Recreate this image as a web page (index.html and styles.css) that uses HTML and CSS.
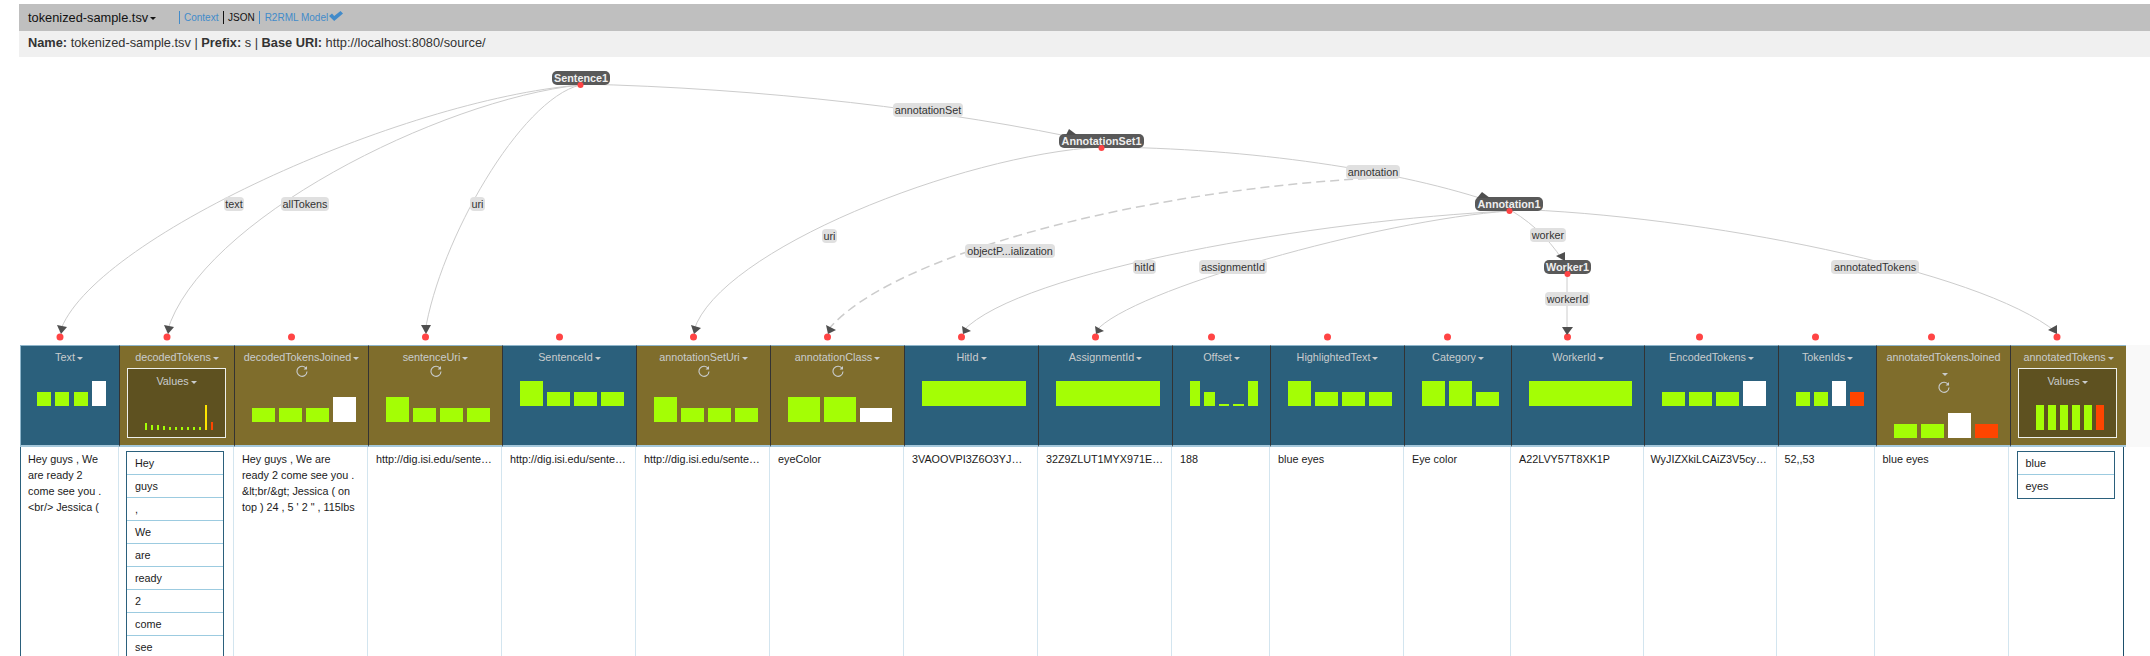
FILE: index.html
```html
<!DOCTYPE html>
<html lang="en">
<head>
  <meta charset="UTF-8">
  <title>tokenized-sample.tsv</title>
  <link rel="stylesheet" href="styles.css">
</head>
<body>

  <div class="titlebar">
    <span class="worksheet-name">tokenized-sample.tsv<i class="caret"></i></span>
    <span class="views">
      <a class="view-link">Context</a>
      <a class="view-link plain">JSON</a>
      <a class="view-link last">R2RML Model</a>
      <svg class="check" viewBox="0 0 14 10"><path d="M0 5 L3 2.5 L5.2 5 L11.5 0 L14 2.5 L5.2 10 Z"/></svg>
    </span>
  </div>
  <div class="metabar">
    <b>Name:</b> tokenized-sample.tsv | <b>Prefix:</b> s | <b>Base URI:</b> http://localhost:8080/source/
  </div>

  <svg class="model" viewBox="0 57 2150 288" width="2150" height="288">
    <g class="edges">
      <path d="M580 85 C400 100 90 240 60 332"/>
      <path d="M580 85 C440 100 200 220 167 332"/>
      <path d="M580 85 C520 100 440 240 425 332"/>
      <path d="M580 84 C760 88 950 110 1095 142"/>
      <path d="M1101 147 C960 155 720 250 694 330"/>
      <path d="M1101 147 C1250 148 1400 170 1498 204"/>
      <path d="M1509 211 C1320 220 1020 270 963 331"/>
      <path d="M1509 211 C1380 220 1130 290 1096 331"/>
      <path d="M1512 211 C1535 225 1555 245 1567 268"/>
      <path d="M1567 274 L1567 330"/>
      <path d="M1509 209 C1700 215 1980 270 2056 332"/>
      <path class="dashed" d="M828 330 C890 255 1140 190 1375 178"/>
    </g>

    <g class="label">
      <rect x="224" y="197" width="20" height="14" rx="4"/><text x="234" y="208">text</text>
      <rect x="281" y="197" width="48" height="14" rx="4"/><text x="305" y="208">allTokens</text>
      <rect x="470" y="197" width="15" height="14" rx="4"/><text x="477.5" y="208">uri</text>
      <rect x="893" y="103" width="70" height="14" rx="4"/><text x="928" y="114">annotationSet</text>
      <rect x="822" y="229" width="15" height="14" rx="4"/><text x="829.5" y="240">uri</text>
      <rect x="965" y="244" width="90" height="14" rx="4"/><text x="1010" y="255">objectP...ialization</text>
      <rect x="1133" y="260" width="23" height="14" rx="4"/><text x="1144.5" y="271">hitId</text>
      <rect x="1199" y="260" width="68" height="14" rx="4"/><text x="1233" y="271">assignmentId</text>
      <rect x="1346" y="165" width="54" height="14" rx="4"/><text x="1373" y="176">annotation</text>
      <rect x="1530" y="228" width="36" height="14" rx="4"/><text x="1548" y="239">worker</text>
      <rect x="1545" y="292" width="45" height="14" rx="4"/><text x="1567.5" y="303">workerId</text>
      <rect x="1831" y="260" width="88" height="14" rx="4"/><text x="1875" y="271">annotatedTokens</text>
    </g>

    <g class="node">
      <rect x="552" y="71" width="58" height="14" rx="5"/><text x="581" y="82">Sentence1</text>
      <rect x="1059" y="134" width="85" height="14" rx="5"/><text x="1101.5" y="145">AnnotationSet1</text>
      <rect x="1475" y="197" width="68" height="14" rx="5"/><text x="1509" y="208">Annotation1</text>
      <rect x="1544" y="260" width="47" height="14" rx="5"/><text x="1567.5" y="271">Worker1</text>
    </g>

    <g class="dots">
      <circle cx="580.5" cy="85" r="3"/>
      <circle cx="1101.5" cy="148" r="3"/>
      <circle cx="1509.5" cy="211" r="3"/>
      <circle cx="1567.5" cy="274" r="3"/>
      <circle cx="60" cy="337" r="3.5"/>
      <circle cx="167" cy="337" r="3.5"/>
      <circle cx="291.5" cy="337" r="3.5"/>
      <circle cx="425.5" cy="337" r="3.5"/>
      <circle cx="559.5" cy="337" r="3.5"/>
      <circle cx="693.5" cy="337" r="3.5"/>
      <circle cx="827.5" cy="337" r="3.5"/>
      <circle cx="961.5" cy="337" r="3.5"/>
      <circle cx="1095.5" cy="337" r="3.5"/>
      <circle cx="1211.5" cy="337" r="3.5"/>
      <circle cx="1327.5" cy="337" r="3.5"/>
      <circle cx="1447.5" cy="337" r="3.5"/>
      <circle cx="1567.5" cy="337" r="3.5"/>
      <circle cx="1699.5" cy="337" r="3.5"/>
      <circle cx="1815.5" cy="337" r="3.5"/>
      <circle cx="1931.5" cy="337" r="3.5"/>
      <circle cx="2057" cy="337" r="3.5"/>
    </g>

    <g class="arrows">
      <polygon points="1069,129 1066,135 1077,135"/>
      <polygon points="1482,192 1477,198 1490,198"/>
      <polygon points="1565,252 1556,256 1565,261"/>
      <polygon points="57,325 67,327 61,334"/>
      <polygon points="164,325 174,327 168,334"/>
      <polygon points="421,325 431,325 426,334"/>
      <polygon points="691,325 701,328 694,334"/>
      <polygon points="826,325 836,330 828,334"/>
      <polygon points="962,326 971,331 963,334"/>
      <polygon points="1095,326 1104,331 1096,334"/>
      <polygon points="1562,327 1573,327 1567,335"/>
      <polygon points="2057,325 2048,330 2057,334"/>
    </g>
  </svg>

  <div class="table">
    <div class="col blue">
      <div class="title">Text<i class="caret"></i></div>
      <div class="chart"><i class="bar"></i><i class="bar"></i><i class="bar"></i><i class="bar tall white"></i></div>
    </div>
    <div class="col olive">
      <div class="title">decodedTokens<i class="caret"></i></div>
      <div class="nested">
        <div class="title">Values<i class="caret"></i></div>
        <div class="chart spark">
          <i class="bar s7"></i><i class="bar s5"></i><i class="bar s5"></i><i class="bar s4"></i><i class="bar s3"></i><i class="bar s3"></i><i class="bar s3"></i><i class="bar s3"></i><i class="bar s3"></i><i class="bar s3"></i><i class="bar tall yellow"></i><i class="bar s8 red"></i>
        </div>
      </div>
    </div>
    <div class="col olive">
      <div class="title">decodedTokensJoined<i class="caret"></i></div>
      <div class="refresh"><svg viewBox="0 0 12 12"><use href="#refresh-icon"/></svg></div>
      <div class="chart"><i class="bar"></i><i class="bar"></i><i class="bar"></i><i class="bar tall white"></i></div>
    </div>
    <div class="col olive">
      <div class="title">sentenceUri<i class="caret"></i></div>
      <div class="refresh"><svg viewBox="0 0 12 12"><use href="#refresh-icon"/></svg></div>
      <div class="chart"><i class="bar tall"></i><i class="bar"></i><i class="bar"></i><i class="bar"></i></div>
    </div>
    <div class="col blue">
      <div class="title">SentenceId<i class="caret"></i></div>
      <div class="chart"><i class="bar tall"></i><i class="bar"></i><i class="bar"></i><i class="bar"></i></div>
    </div>
    <div class="col olive">
      <div class="title">annotationSetUri<i class="caret"></i></div>
      <div class="refresh"><svg viewBox="0 0 12 12"><use href="#refresh-icon"/></svg></div>
      <div class="chart"><i class="bar tall"></i><i class="bar"></i><i class="bar"></i><i class="bar"></i></div>
    </div>
    <div class="col olive">
      <div class="title">annotationClass<i class="caret"></i></div>
      <div class="refresh"><svg viewBox="0 0 12 12"><use href="#refresh-icon"/></svg></div>
      <div class="chart"><i class="bar tall"></i><i class="bar tall"></i><i class="bar white"></i></div>
    </div>
    <div class="col blue">
      <div class="title">HitId<i class="caret"></i></div>
      <div class="chart"><i class="bar tall"></i></div>
    </div>
    <div class="col blue">
      <div class="title">AssignmentId<i class="caret"></i></div>
      <div class="chart"><i class="bar tall"></i></div>
    </div>
    <div class="col blue">
      <div class="title">Offset<i class="caret"></i></div>
      <div class="chart"><i class="bar tall"></i><i class="bar"></i><i class="bar s2"></i><i class="bar s2"></i><i class="bar tall"></i></div>
    </div>
    <div class="col blue">
      <div class="title">HighlightedText<i class="caret"></i></div>
      <div class="chart"><i class="bar tall"></i><i class="bar"></i><i class="bar"></i><i class="bar"></i></div>
    </div>
    <div class="col blue">
      <div class="title">Category<i class="caret"></i></div>
      <div class="chart"><i class="bar tall"></i><i class="bar tall"></i><i class="bar"></i></div>
    </div>
    <div class="col blue">
      <div class="title">WorkerId<i class="caret"></i></div>
      <div class="chart"><i class="bar tall"></i></div>
    </div>
    <div class="col blue">
      <div class="title">EncodedTokens<i class="caret"></i></div>
      <div class="chart"><i class="bar"></i><i class="bar"></i><i class="bar"></i><i class="bar tall white"></i></div>
    </div>
    <div class="col blue">
      <div class="title">TokenIds<i class="caret"></i></div>
      <div class="chart"><i class="bar"></i><i class="bar"></i><i class="bar tall white"></i><i class="bar red"></i></div>
    </div>
    <div class="col olive">
      <div class="title">annotatedTokensJoined <i class="caret"></i></div>
      <div class="refresh"><svg viewBox="0 0 12 12"><use href="#refresh-icon"/></svg></div>
      <div class="chart"><i class="bar"></i><i class="bar"></i><i class="bar tall white"></i><i class="bar red"></i></div>
    </div>
    <div class="col olive">
      <div class="title">annotatedTokens<i class="caret"></i></div>
      <div class="nested">
        <div class="title">Values<i class="caret"></i></div>
        <div class="chart"><i class="bar tall"></i><i class="bar tall"></i><i class="bar tall"></i><i class="bar tall"></i><i class="bar tall"></i><i class="bar tall red"></i></div>
      </div>
    </div>
    <div class="filler"></div>

    <div class="cell edge-left">Hey guys , We are ready 2 come see you . &lt;br/&gt; Jessica (</div>
    <div class="cell">
      <div class="tokens">
        <div>Hey</div><div>guys</div><div>,</div><div>We</div><div>are</div><div>ready</div><div>2</div><div>come</div><div>see</div>
      </div>
    </div>
    <div class="cell">Hey guys , We are ready 2 come see you . &amp;lt;br/&amp;gt; Jessica ( on top ) 24 , 5 ' 2 " , 115lbs</div>
    <div class="cell clip">http://dig.isi.edu/sente…</div>
    <div class="cell clip">http://dig.isi.edu/sente…</div>
    <div class="cell clip">http://dig.isi.edu/sente…</div>
    <div class="cell">eyeColor</div>
    <div class="cell clip">3VAOOVPI3Z6O3YJ…</div>
    <div class="cell clip">32Z9ZLUT1MYX971E…</div>
    <div class="cell">188</div>
    <div class="cell">blue eyes</div>
    <div class="cell">Eye color</div>
    <div class="cell">A22LVY57T8XK1P</div>
    <div class="cell clip late">WyJIZXkiLCAiZ3V5cy…</div>
    <div class="cell late">52,,53</div>
    <div class="cell late">blue eyes</div>
    <div class="cell edge-right">
      <div class="tokens">
        <div>blue</div><div>eyes</div>
      </div>
    </div>
  </div>

  <svg class="defs" width="0" height="0">
    <symbol id="refresh-icon" viewBox="0 0 12 12">
      <path d="M10.2 3.6 A5 5 0 1 0 11 6.5" fill="none" stroke="currentColor" stroke-width="1.1"/>
      <path d="M11 1 L11 4.4 L7.6 4.4 Z" fill="currentColor"/>
    </symbol>
  </svg>

</body>
</html>
```

FILE: styles.css
```css
html, body { margin: 0; padding: 0; background: #fff; overflow: hidden; }
body { font-family: "Liberation Sans", Arial, sans-serif; font-size: 10.8px; color: #1a1a1a; height: 656px; }

.titlebar { margin: 4px 0 0 19px; height: 27px; background: #bfbfbf; display: flex; align-items: center; padding-left: 9px; color: #111; }
.worksheet-name { font-size: 12.8px; width: 151px; }
.views { display: flex; align-items: center; font-size: 10px; }
.view-link { color: #428bca; border-left: 1px solid #428bca; padding: 0 4.5px 0 4px; line-height: 13px; }
.view-link.plain { color: #111; border-left-color: #111; padding-right: 4px; }
.view-link.last { padding: 0 1px 0 5px; }
.check { width: 14px; height: 10px; fill: #428bca; margin-top: -4px; }
.metabar { margin-left: 19px; height: 26px; line-height: 24px; background: #f0f0f0; padding-left: 9px; font-size: 12.8px; color: #333; }

.model { display: block; }
.edges path { fill: none; stroke: #ccc; stroke-width: 1; }
.edges .dashed { stroke-width: 1.5; stroke-dasharray: 9 5; }
.label rect { fill: #e0e0e0; }
.label text { font-size: 10.8px; fill: #333; text-anchor: middle; }
.node rect { fill: #595959; }
.node text { font-size: 10.8px; font-weight: bold; fill: #eee; text-anchor: middle; }
.dots circle { fill: #ff4444; }
.arrows polygon { fill: #4f4f4f; }
.defs { position: absolute; }

.table { display: grid; grid-template-columns: 99px 115px 134px 134px 134px 134px 134px 134px 134px 98px 134px 107px 133px 134px 98px 134px 116px 1fr; grid-template-rows: 102px 1fr; margin-left: 20px; height: 311px; }
.col { border-top: 1px solid #8fb6cb; border-bottom: 2px solid #a5c8db; border-left: 1px solid #333; padding: 3px 12px 0 17px; color: #c9cccd; box-sizing: border-box; text-align: center; min-width: 0; }
.col:first-child { border-left-color: #8fb6cb; padding: 3px 13px 0 16px; }
.blue { background: #2b607c; }
.olive { background: #7f6d2c; }
.filler { background: #f9f9f9; }
.title { line-height: 16px; margin: 0 -12px 0 -17px; padding: 0 8px; }
.caret { display: inline-block; width: 0; height: 0; margin-left: 2px; vertical-align: middle; border-top: 3px solid currentColor; border-left: 3px solid transparent; border-right: 3px solid transparent; }
.refresh { height: 16px; margin: 0 -12px 0 -17px; }
.refresh svg { width: 12px; height: 12px; display: block; margin: 0 auto; }
.chart { display: flex; gap: 4.2px; height: 25px; margin-top: 16px; align-items: flex-end; }
.bar { display: block; flex: 1; height: 14px; background: #a4fe05; }
.bar.tall { height: 25px; }
.bar.white { background: #fff; }
.bar.red { background: #ff4500; }
.bar.yellow { background: #ffe600; }
.bar.s2 { height: 2px; }
.bar.s3 { height: 3px; }
.bar.s4 { height: 4px; }
.bar.s5 { height: 5px; }
.bar.s7 { height: 7px; }
.bar.s8 { height: 8px; }
.nested { margin: 3px 0 0 -10px; width: 99px; box-sizing: border-box; border: 1px solid #eef0ec; background: #5e5120; height: 70px; padding: 4px 12px 0 17px; }
.nested .title { margin: 0 -12px 0 -17px; padding: 0; }
.spark { gap: 4.4px; }

.cell { border-right: 1px solid #d3e5ef; padding: 4px 8px 0 8px; line-height: 16px; min-width: 0; }
.cell.late { padding-left: 6.5px; margin-right: 1px; }
.edge-left { border-left: 1px solid #2b607c; padding-left: 7px; }
.edge-right { border-right: 1px solid #1d4f6b; margin-right: 2px; padding-left: 7.5px; }
.clip { white-space: nowrap; }
.tokens { border: 1px solid #2b607c; width: 98px; box-sizing: border-box; margin-left: -1px; }
.tokens div { height: 23px; line-height: 23px; padding-left: 8px; box-sizing: border-box; border-bottom: 1px solid #9ccbe0; }
.tokens div:last-child { border-bottom: 0; }
```
